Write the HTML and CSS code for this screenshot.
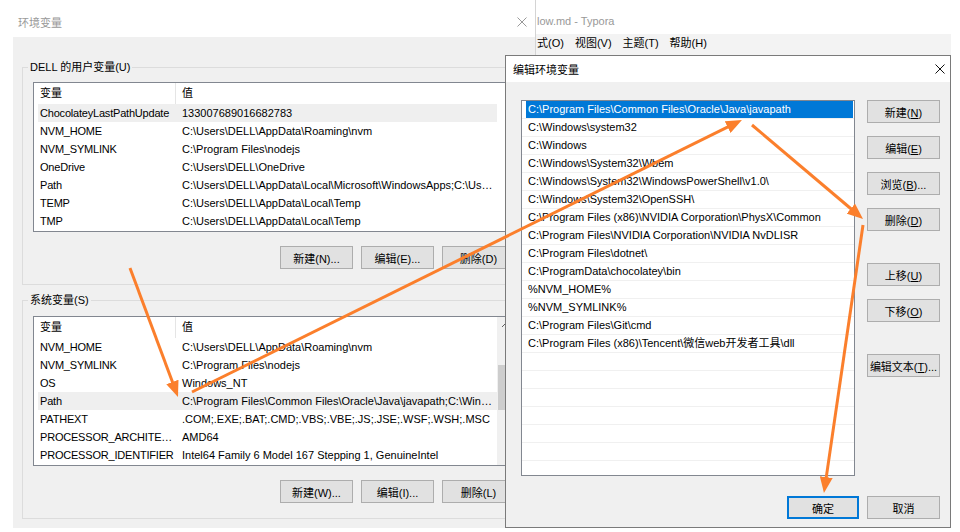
FILE: index.html
```html
<!DOCTYPE html>
<html lang="zh-CN">
<head>
    <meta charset="UTF-8">
    <title>环境变量</title>
    <link rel="stylesheet" href="styles.css">
</head>
<body>

<div class="desktop">

    <!-- Typora window behind -->
    <div class="win win-typora">
        <div class="typora-title">low.md - Typora</div>
        <div class="typora-menu">
            <span>式(O)</span>
            <span>视图(V)</span>
            <span>主题(T)</span>
            <span>帮助(H)</span>
        </div>
    </div>

    <!-- 环境变量 dialog -->
    <div class="win win-env">
        <div class="titlebar inactive">
            <span>环境变量</span>
            <svg class="close" viewBox="0 0 10 10"><path d="M0.5 0.5 L9.5 9.5 M9.5 0.5 L0.5 9.5"/></svg>
        </div>
        <div class="dlg-body">
            <fieldset class="group">
                <legend>DELL 的用户变量(U)</legend>
                <div class="listview">
                    <div class="lv-main">
                        <div class="lv-head"><div>变量</div><div>值</div></div>
                        <div class="lv-row sel"><div>ChocolateyLastPathUpdate</div><div>133007689016682783</div></div>
                        <div class="lv-row"><div>NVM_HOME</div><div>C:\Users\DELL\AppData\Roaming\nvm</div></div>
                        <div class="lv-row"><div>NVM_SYMLINK</div><div>C:\Program Files\nodejs</div></div>
                        <div class="lv-row"><div>OneDrive</div><div>C:\Users\DELL\OneDrive</div></div>
                        <div class="lv-row"><div>Path</div><div>C:\Users\DELL\AppData\Local\Microsoft\WindowsApps;C:\Users\DELL\AppData\Roaming\npm</div></div>
                        <div class="lv-row"><div>TEMP</div><div>C:\Users\DELL\AppData\Local\Temp</div></div>
                        <div class="lv-row"><div>TMP</div><div>C:\Users\DELL\AppData\Local\Temp</div></div>
                    </div>
                    <div class="lv-scroll"></div>
                </div>
                <div class="btn-row">
                    <button class="btn">新建(N)...</button>
                    <button class="btn">编辑(E)...</button>
                    <button class="btn">删除(D)</button>
                </div>
            </fieldset>

            <fieldset class="group group-sys">
                <legend>系统变量(S)</legend>
                <div class="listview">
                    <div class="lv-main">
                        <div class="lv-head"><div>变量</div><div>值</div></div>
                        <div class="lv-row"><div>NVM_HOME</div><div>C:\Users\DELL\AppData\Roaming\nvm</div></div>
                        <div class="lv-row"><div>NVM_SYMLINK</div><div>C:\Program Files\nodejs</div></div>
                        <div class="lv-row"><div>OS</div><div>Windows_NT</div></div>
                        <div class="lv-row sel"><div>Path</div><div>C:\Program Files\Common Files\Oracle\Java\javapath;C:\Windows\system32</div></div>
                        <div class="lv-row"><div>PATHEXT</div><div>.COM;.EXE;.BAT;.CMD;.VBS;.VBE;.JS;.JSE;.WSF;.WSH;.MSC</div></div>
                        <div class="lv-row"><div>PROCESSOR_ARCHITECTURE</div><div>AMD64</div></div>
                        <div class="lv-row"><div>PROCESSOR_IDENTIFIER</div><div>Intel64 Family 6 Model 167 Stepping 1, GenuineIntel</div></div>
                    </div>
                    <div class="lv-scroll active">
                        <svg class="sb-up" viewBox="0 0 17 17"><path d="M5 10 L8.5 6.5 L12 10"/></svg>
                        <div class="sb-thumb"></div>
                    </div>
                </div>
                <div class="btn-row">
                    <button class="btn">新建(W)...</button>
                    <button class="btn">编辑(I)...</button>
                    <button class="btn">删除(L)</button>
                </div>
            </fieldset>
        </div>
    </div>

    <!-- 编辑环境变量 dialog -->
    <div class="win win-edit">
        <div class="titlebar">
            <span>编辑环境变量</span>
            <svg class="close" viewBox="0 0 10 10"><path d="M0.5 0.5 L9.5 9.5 M9.5 0.5 L0.5 9.5"/></svg>
        </div>
        <div class="edit-body">
            <div class="listbox">
                <div class="lb-row"><div class="lb-sel">C:\Program Files\Common Files\Oracle\Java\javapath</div></div>
                <div class="lb-row">C:\Windows\system32</div>
                <div class="lb-row">C:\Windows</div>
                <div class="lb-row">C:\Windows\System32\Wbem</div>
                <div class="lb-row">C:\Windows\System32\WindowsPowerShell\v1.0\</div>
                <div class="lb-row">C:\Windows\System32\OpenSSH\</div>
                <div class="lb-row">C:\Program Files (x86)\NVIDIA Corporation\PhysX\Common</div>
                <div class="lb-row">C:\Program Files\NVIDIA Corporation\NVIDIA NvDLISR</div>
                <div class="lb-row">C:\Program Files\dotnet\</div>
                <div class="lb-row">C:\ProgramData\chocolatey\bin</div>
                <div class="lb-row">%NVM_HOME%</div>
                <div class="lb-row">%NVM_SYMLINK%</div>
                <div class="lb-row">C:\Program Files\Git\cmd</div>
                <div class="lb-row">C:\Program Files (x86)\Tencent\微信web开发者工具\dll</div>
                <div class="lb-row"></div>
                <div class="lb-row"></div>
                <div class="lb-row"></div>
                <div class="lb-row"></div>
                <div class="lb-row"></div>
                <div class="lb-row"></div>
                <div class="lb-row"></div>
                <div class="lb-row"></div>
            </div>
            <div class="side-btns">
                <button class="btn">新建(<u>N</u>)</button>
                <button class="btn">编辑(<u>E</u>)</button>
                <button class="btn">浏览(<u>B</u>)...</button>
                <button class="btn">删除(<u>D</u>)</button>
                <button class="btn btn-sep">上移(<u>U</u>)</button>
                <button class="btn">下移(<u>O</u>)</button>
                <button class="btn btn-sep">编辑文本(<u>T</u>)...</button>
            </div>
            <div class="edit-footer">
                <button class="btn btn-default">确定</button>
                <button class="btn">取消</button>
            </div>
        </div>
    </div>

    <!-- annotation arrows -->
    <svg class="arrows" viewBox="0 0 960 532">
        <defs>
            <marker id="head" markerUnits="userSpaceOnUse" markerWidth="16" markerHeight="13" refX="6" refY="6.5" orient="auto">
                <path d="M0 0 L16 6.5 L0 13 Z" fill="#fb7f2c"/>
            </marker>
        </defs>
        <line x1="130" y1="268" x2="174.5" y2="387.6" marker-end="url(#head)"/>
        <line x1="192" y1="392" x2="733" y2="124.4" marker-end="url(#head)"/>
        <line x1="752" y1="125" x2="855.4" y2="212.5" marker-end="url(#head)"/>
        <line x1="863" y1="225" x2="825.4" y2="483.1" marker-end="url(#head)"/>
    </svg>

</div>

</body>
</html>
```

FILE: styles.css
```css
body {
    margin: 0;
    padding: 0;
    background-color: #fff;
    font-family: "Liberation Sans", "Noto Sans CJK SC", sans-serif;
    font-size: 11px;
    color: #000;
}

.desktop {
    position: relative;
    width: 960px;
    height: 532px;
    overflow: hidden;
}

.win {
    position: absolute;
    box-sizing: border-box;
}

/* Typora, mostly hidden */
.win-typora {
    left: 535px;
    top: 0;
    width: 416px;
    height: 90px;
    background-color: #fff;
    border-left: 1px solid #d4d4d4;
}

.typora-title {
    height: 34px;
    box-sizing: border-box;
    padding: 13px 0 0 1px;
    line-height: 16px;
    color: #999;
}

.typora-menu {
    display: flex;
    gap: 11px;
    height: 21px;
    padding-left: 1px;
    line-height: 18px;
    background-color: #f3f3f3;
}

/* title bars */
.titlebar {
    display: flex;
    justify-content: space-between;
    align-items: center;
    background-color: #fff;
    box-sizing: border-box;
}

.titlebar .close {
    width: 10px;
    height: 10px;
    fill: none;
    stroke: #111;
    stroke-width: 1;
}

.titlebar.inactive {
    color: #999;
}

.titlebar.inactive .close {
    stroke: #999;
}

/* 环境变量 */
.win-env {
    left: 13px;
    top: 0;
    width: 522px;
    height: 528px;
    z-index: 2;
}

.win-env .titlebar {
    height: 37px;
    padding: 7px 8px 0 5px;
}

.dlg-body {
    height: 491px;
    background-color: #f0f0f0;
    overflow: hidden;
}

.group {
    margin: 22px 9px 0 9px;
    padding: 7px 10px 15px;
    border: 1px solid #dcdcdc;
    min-width: 0;
}

.group legend {
    padding: 0 2px;
    margin-left: -5px;
    line-height: 16px;
}

.group-sys {
    margin-top: 7px;
    padding-top: 8px;
}

.listview {
    display: flex;
    height: 150px;
    box-sizing: border-box;
    border: 1px solid #828790;
    background-color: #fff;
}

.lv-main {
    flex: 1;
    min-width: 0;
    overflow: hidden;
}

.lv-head {
    display: grid;
    grid-template-columns: 142px 1fr;
    height: 21px;
    line-height: 21px;
}

.lv-head div {
    padding-left: 6px;
}

.lv-head div:first-child {
    border-right: 1px solid #e5e5e5;
}

.lv-row {
    display: grid;
    grid-template-columns: 138px 1fr;
    height: 18px;
    line-height: 18px;
    margin-left: 4px;
}

.lv-row div {
    white-space: nowrap;
    overflow: hidden;
    text-overflow: ellipsis;
}

.lv-row div:first-child {
    padding: 0 1px 0 2px;
    letter-spacing: -0.2px;
}

.lv-row div:last-child {
    padding: 0 4px 0 6px;
}

.lv-row.sel {
    background-color: #efefef;
}

.lv-scroll {
    width: 17px;
    flex-shrink: 0;
}

.lv-scroll.active {
    background-color: #f0f0f0;
}

.sb-up {
    display: block;
    width: 17px;
    height: 17px;
    fill: none;
    stroke: #606060;
    stroke-width: 1;
}

.sb-thumb {
    height: 45px;
    margin: 31px 1px 0;
    background-color: #cdcdcd;
}

.btn-row {
    display: flex;
    justify-content: flex-end;
    gap: 8px;
    margin-top: 14px;
}

.btn {
    width: 73px;
    height: 23px;
    padding: 0;
    box-sizing: border-box;
    border: 1px solid #adadad;
    background-color: #e1e1e1;
    font: inherit;
    color: #000;
    white-space: nowrap;
}

/* 编辑环境变量 */
.win-edit {
    left: 505px;
    top: 55px;
    width: 446px;
    height: 473px;
    border: 1px solid #7a7a7a;
    background-color: #f0f0f0;
    z-index: 3;
}

.win-edit .titlebar {
    height: 26px;
    padding: 0 5px 0 7px;
}

.edit-body {
    display: grid;
    grid-template-columns: 334px 73px;
    column-gap: 12px;
    padding: 18px 10px 0 15px;
}

.listbox {
    height: 376px;
    box-sizing: border-box;
    border: 1px solid #828790;
    background-color: #fff;
    overflow: hidden;
}

.lb-row {
    height: 18px;
    box-sizing: border-box;
    border-bottom: 1px solid #f0f0f0;
    padding-left: 6px;
    line-height: 17px;
    white-space: nowrap;
}

.lb-row:first-child {
    padding-left: 0;
}

.lb-sel {
    margin: 0 1px 0 4px;
    padding-left: 2px;
    background-color: #0078d7;
    color: #fff;
}

.side-btns {
    display: flex;
    flex-direction: column;
    gap: 13px;
}

.side-btns .btn-sep {
    margin-top: 19px;
}

.edit-footer {
    grid-column: 1 / 3;
    display: flex;
    justify-content: flex-end;
    gap: 8px;
    margin-top: 20px;
}

.btn-default {
    width: 72px;
    border-color: #0078d7;
    box-shadow: inset 0 0 0 1px #0078d7;
}

/* arrows drawn over the screenshot */
.arrows {
    position: absolute;
    left: 0;
    top: 0;
    width: 960px;
    height: 532px;
    z-index: 10;
    pointer-events: none;
}

.arrows line {
    stroke: #fb7f2c;
    stroke-width: 3;
}
```
